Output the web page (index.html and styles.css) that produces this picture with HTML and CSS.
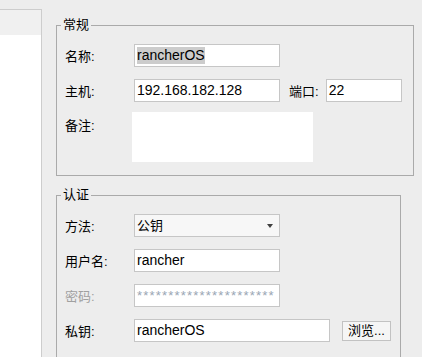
FILE: index.html
```html
<!DOCTYPE html>
<html>

<head>
  <meta charset="utf-8">
  <title>连接属性</title>
  <link rel="stylesheet" href="styles.css">
</head>

<body>
  <div class="window">
    <div class="sidebar">
      <div class="sidebar-head"></div>
      <div class="sidebar-body"></div>
    </div>

    <div class="main">
      <!-- general settings -->
      <fieldset class="group group-general">
        <legend>常规</legend>
        <div class="row">
          <label class="label">名称:</label>
          <div class="field field-wide"><span class="selected">rancherOS</span></div>
        </div>
        <div class="row">
          <label class="label">主机:</label>
          <div class="field field-wide">192.168.182.128</div>
          <label class="label label-port">端口:</label>
          <div class="field field-port">22</div>
        </div>
        <div class="row row-note">
          <label class="label">备注:</label>
          <div class="note"></div>
        </div>
      </fieldset>

      <!-- authentication -->
      <fieldset class="group group-auth">
        <legend>认证</legend>
        <div class="row">
          <label class="label">方法:</label>
          <div class="field field-wide combo">
            <span>公钥</span>
            <span class="arrow"></span>
          </div>
        </div>
        <div class="row">
          <label class="label">用户名:</label>
          <div class="field field-wide">rancher</div>
        </div>
        <div class="row disabled">
          <label class="label">密码:</label>
          <div class="field field-wide password">**********************</div>
        </div>
        <div class="row">
          <label class="label">私钥:</label>
          <div class="field field-key">rancherOS</div>
          <button class="browse">浏览...</button>
        </div>
      </fieldset>
    </div>
  </div>
</body>

</html>
```

FILE: styles.css
```css
body {
  margin: 0;
  background: #ededed;
  font-family: "Liberation Sans", "Noto Sans CJK SC", sans-serif;
  font-size: 13px;
  color: #000;
}

.window {
  display: flex;
  height: 357px;
  overflow: hidden;
}

.sidebar {
  width: 41px;
  margin-top: 9px;
  border-top: 1px solid #cdcdcd;
  border-right: 1px solid #cdcdcd;
  display: flex;
  flex-direction: column;
}

.sidebar-head {
  height: 25px;
  background: #f0f0f0;
}

.sidebar-body {
  flex: 1;
  background: #fff;
}

.main {
  padding-left: 14px;
}

.group {
  box-sizing: border-box;
  margin: 0;
  border: 1px solid #aaaaaa;
  padding: 11px 8px 13px;
}

.group legend {
  margin-left: -4px;
  padding: 0 2px;
  line-height: 16px;
  font-size: 13px;
}

.group-general {
  width: 358px;
  margin-top: 17px;
}

.group-auth {
  width: 345px;
  margin-top: 11px;
  padding-bottom: 30px;
}

.row {
  display: flex;
  align-items: center;
  height: 23px;
  margin-bottom: 12px;
}

.row:last-child {
  margin-bottom: 0;
}

.row-note {
  height: auto;
  align-items: flex-start;
  margin-top: -2px;
}

.label {
  width: 69px;
  flex-shrink: 0;
}

.row-note .label {
  padding-top: 3px;
}

.label-port {
  width: auto;
  margin-left: 9px;
  margin-right: 7px;
}

.field {
  box-sizing: border-box;
  height: 23px;
  border: 1px solid #c6c6c6;
  background: #fff;
  padding: 0 2px;
  font-size: 14px;
  line-height: 21px;
  white-space: nowrap;
  overflow: hidden;
}

.field-wide {
  width: 146px;
}

.field-port {
  width: 76px;
}

.field-key {
  width: 196px;
}

.selected {
  background: #cccccc;
  display: inline-block;
  line-height: 17px;
}

.note {
  width: 181px;
  height: 50px;
  margin-left: -2px;
  background: #fff;
}

.combo {
  display: flex;
  align-items: center;
  justify-content: space-between;
  background: #f7f7f7;
  font-size: 13px;
}

.combo .arrow {
  width: 0;
  height: 0;
  margin-right: 4px;
  border-left: 3px solid transparent;
  border-right: 3px solid transparent;
  border-top: 4px solid #404040;
}

.disabled .label {
  color: #a0a0a0;
}

.password {
  color: #9aa6b4;
  font-size: 13px;
  letter-spacing: 1.2px;
}

.browse {
  box-sizing: border-box;
  width: 49px;
  height: 20px;
  margin-left: 12px;
  padding: 0;
  border: 1px solid #c2c2c2;
  background: #f5f5f5;
  font-family: "Liberation Sans", "Noto Sans CJK SC", sans-serif;
  font-size: 13px;
  line-height: 18px;
  color: #000;
}
```
